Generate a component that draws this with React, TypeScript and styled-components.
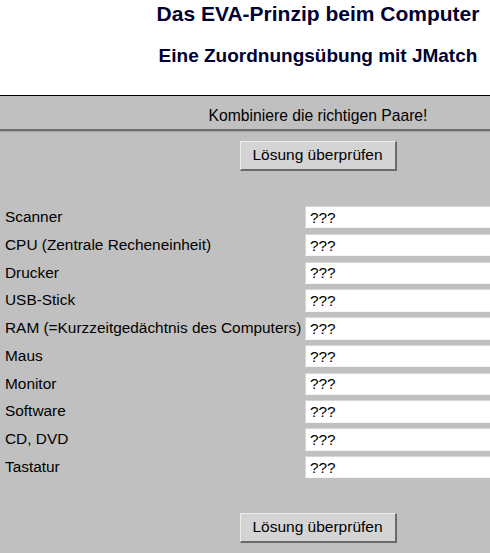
import React from 'react'
import styled, { createGlobalStyle } from 'styled-components';

const GlobalStyle = createGlobalStyle`
  html, body {
    margin: 0;
    padding: 0;
    background: #ffffff;
  }
  body {
    font-family: "Liberation Sans", Arial, sans-serif;
    color: #000000;
  }
`;

// the original page is wider than the view; its centre line sits at x=318
const CENTER_OFFSET = 146;

const StyledPage = styled.div`
    width: 490px;
    display: flex;
    flex-direction: column;
`;

const StyledHeader = styled.div`
    display: flex;
    flex-direction: column;
    align-items: center;
    padding: 2px 0 27.6px ${CENTER_OFFSET}px;
`;

const StyledTitle = styled.h2<{ $size: number; $gap?: number }>`
    margin: 0;
    margin-top: ${p => p.$gap || 0}px;
    font-size: ${p => p.$size}px;
    line-height: ${p => p.$size + 3}px;
    font-weight: 700;
    white-space: nowrap;
    color: #000033;
`;

const StyledExercise = styled.div`
    background-color: #c0c0c0;
    border-top: 1px solid #000000;
    display: flex;
    flex-direction: column;
    padding-bottom: 20px;
`;

const StyledInstructions = styled.div`
    font-size: 15.7px;
    line-height: 19px;
    text-align: center;
    padding: 10px 0 4px ${CENTER_OFFSET}px;
    border-bottom: 2px solid #6e6e6e;
    box-shadow: 0 1px 0 #a4a4a4;
`;

const StyledButtonRow = styled.div<{ $top: number }>`
    display: flex;
    justify-content: center;
    padding-top: ${p => p.$top}px;
    padding-left: ${CENTER_OFFSET}px;
`;

const StyledButton = styled.button`
    width: 157px;
    height: 30px;
    box-sizing: border-box;
    font-family: "Liberation Sans", Arial, sans-serif;
    font-size: 15.5px;
    color: #000000;
    background-color: #d4d4d4;
    border-style: solid;
    border-width: 1px 2px 2px 1px;
    border-color: #ededed #6a6a6a #6a6a6a #ededed;
    padding: 0;
    cursor: pointer;
`;

const StyledGrid = styled.div`
    display: grid;
    grid-template-columns: 296px 1fr;
    column-gap: 4px;
    row-gap: 5.28px;
    padding: 35px 0 0 5px;
`;

const StyledLabel = styled.div`
    font-size: 15.4px;
    line-height: 22.5px;
    white-space: nowrap;
    display: flex;
    align-items: center;
`;

const StyledSelect = styled.select`
    appearance: none;
    -webkit-appearance: none;
    width: 100%;
    height: 22.5px;
    box-sizing: border-box;
    margin: 0;
    padding: 0 0 0 4px;
    font-family: "Liberation Sans", Arial, sans-serif;
    font-size: 15.4px;
    color: #000000;
    background-color: #ffffff;
    border-style: solid;
    border-width: 1px 0 1px 1px;
    border-color: #d6d6d6 #f6f6f6 #f6f6f6 #d6d6d6;
    border-radius: 0;
    outline: none;
`;

const items = [
  'Scanner',
  'CPU (Zentrale Recheneinheit)',
  'Drucker',
  'USB-Stick',
  'RAM (=Kurzzeitgedächtnis des Computers)',
  'Maus',
  'Monitor',
  'Software',
  'CD, DVD',
  'Tastatur',
];

const App: React.FC = () => {
  return (
    <>
      <GlobalStyle />
      <StyledPage>
        <StyledHeader>
          <StyledTitle $size={21}>Das EVA-Prinzip beim Computer</StyledTitle>
          <StyledTitle $size={19} $gap={19.4}>Eine Zuordnungsübung mit JMatch</StyledTitle>
        </StyledHeader>
        <StyledExercise>
          <StyledInstructions>Kombiniere die richtigen Paare!</StyledInstructions>
          <StyledButtonRow $top={10}>
            <StyledButton>Lösung überprüfen</StyledButton>
          </StyledButtonRow>
          <StyledGrid>
            {items.map(item => (
              <React.Fragment key={item}>
                <StyledLabel>{item}</StyledLabel>
                <StyledSelect defaultValue="x">
                  <option value="x">???</option>
                </StyledSelect>
              </React.Fragment>
            ))}
          </StyledGrid>
          <StyledButtonRow $top={34.5}>
            <StyledButton>Lösung überprüfen</StyledButton>
          </StyledButtonRow>
        </StyledExercise>
      </StyledPage>
    </>
  )
}

export default App
